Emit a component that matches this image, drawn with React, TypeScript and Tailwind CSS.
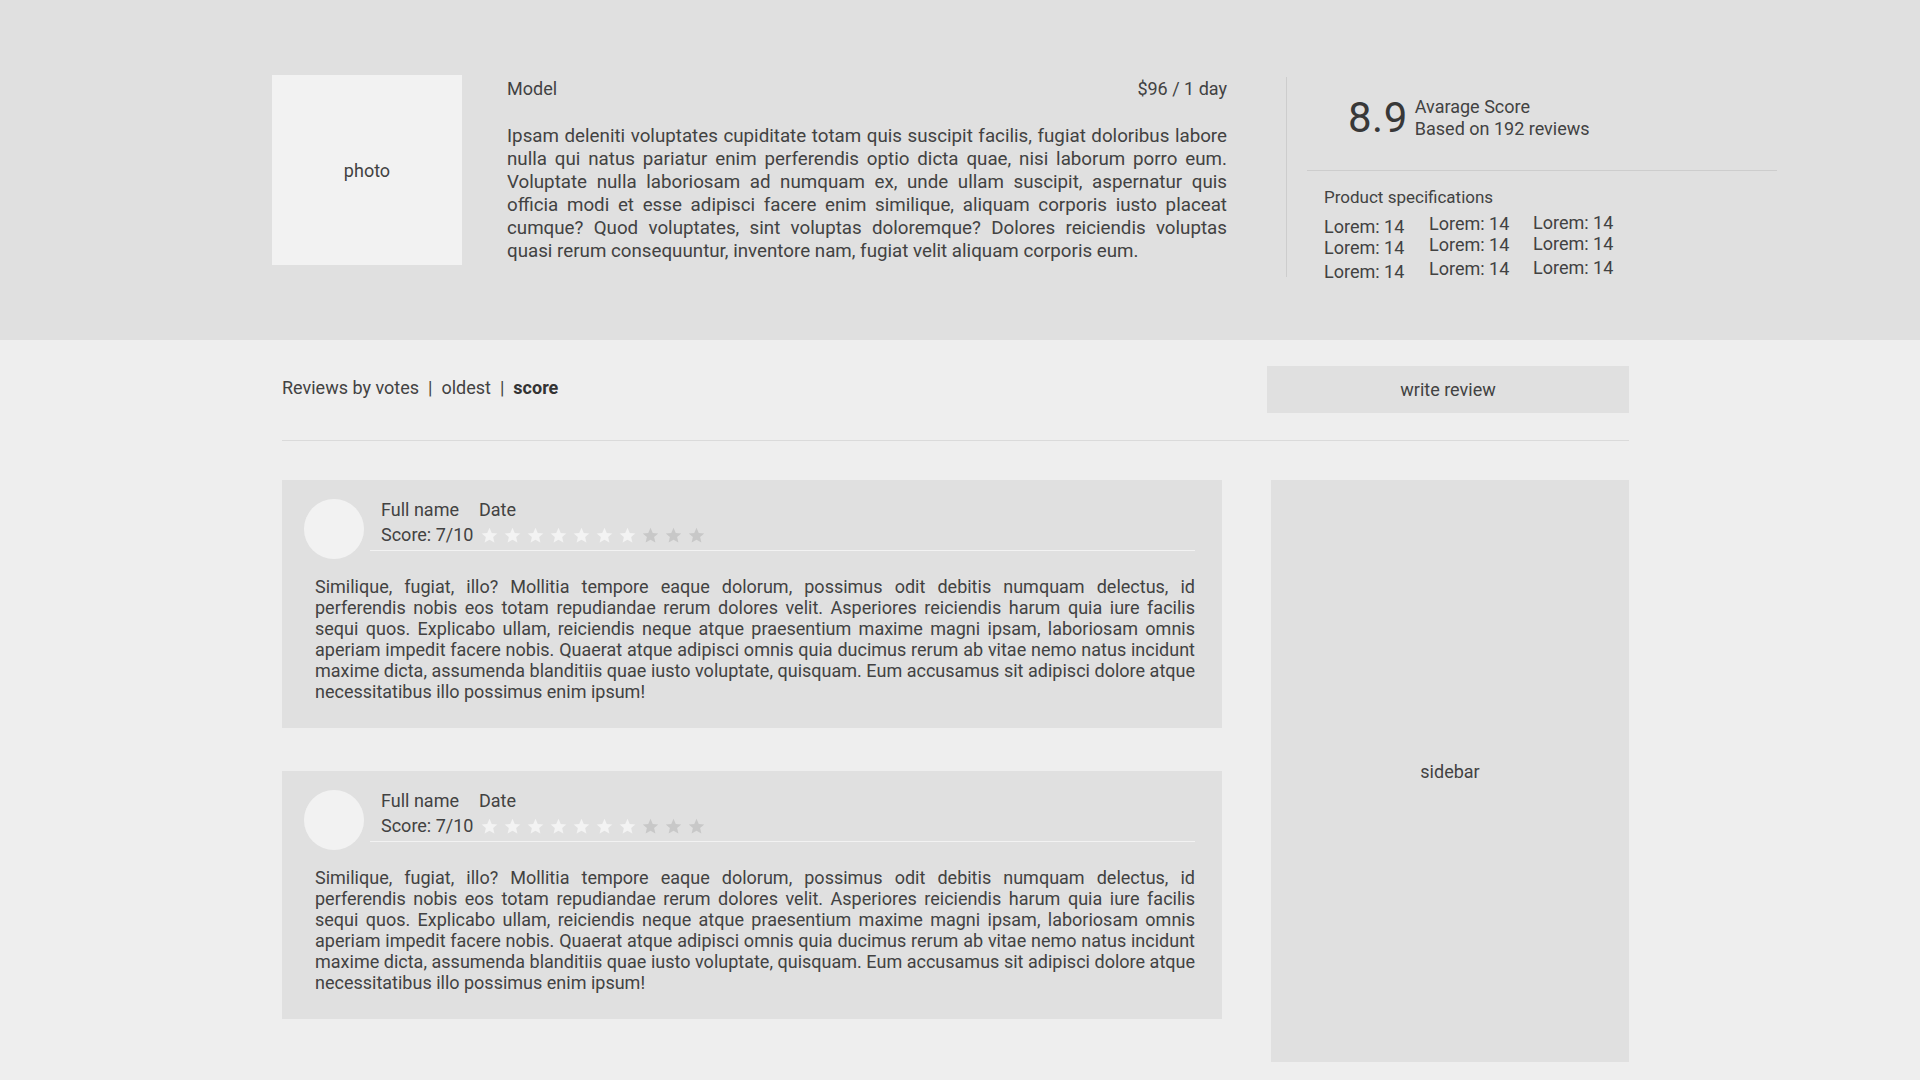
import React from "react";

const REVIEW_TEXT =
  "Similique, fugiat, illo? Mollitia tempore eaque dolorum, possimus odit debitis numquam delectus, id perferendis nobis eos totam repudiandae rerum dolores velit. Asperiores reiciendis harum quia iure facilis sequi quos. Explicabo ullam, reiciendis neque atque praesentium maxime magni ipsam, laboriosam omnis aperiam impedit facere nobis. Quaerat atque adipisci omnis quia ducimus rerum ab vitae nemo natus incidunt maxime dicta, assumenda blanditiis quae iusto voluptate, quisquam. Eum accusamus sit adipisci dolore atque necessitatibus illo possimus enim ipsum!";

const DESCRIPTION =
  "Ipsam deleniti voluptates cupiditate totam quis suscipit facilis, fugiat doloribus labore nulla qui natus pariatur enim perferendis optio dicta quae, nisi laborum porro eum. Voluptate nulla laboriosam ad numquam ex, unde ullam suscipit, aspernatur quis officia modi et esse adipisci facere enim similique, aliquam corporis iusto placeat cumque? Quod voluptates, sint voluptas doloremque? Dolores reiciendis voluptas quasi rerum consequuntur, inventore nam, fugiat velit aliquam corporis eum.";

function Star({ lit }: { lit: boolean }) {
  return (
    <svg width="17" height="17" viewBox="0 0 24 24" className={lit ? "fill-[#f3f3f3]" : "fill-[#c8c8c8]"}>
      <path d="M12 1l3.2 7.3 7.8.7-5.9 5.2 1.8 7.7L12 17.9l-6.9 4 1.8-7.7L1 9l7.8-.7z" />
    </svg>
  );
}

function ReviewCard() {
  return (
    <div className="bg-[#e0e0e0] pl-[22px] pr-[27px] pt-[19px] pb-[26px]">
      <div className="flex items-start">
        <div className="w-[60px] h-[60px] rounded-full bg-[#f2f2f2] shrink-0" />
        <div className="ml-[6px] flex-1 pl-[11px] pb-[3px] border-b border-[#f2f2f2] leading-[24px]">
          <div className="flex gap-[20px] -mt-[1px]">
            <span>Full name</span>
            <span>Date</span>
          </div>
          <div className="flex items-center mt-[1px]">
            <span>Score: 7/10</span>
            <div className="ml-[8px] flex gap-[6px]">
              {Array.from({ length: 10 }).map((_, i) => (
                <Star key={i} lit={i < 7} />
              ))}
            </div>
          </div>
        </div>
      </div>
      <p className="mt-[17px] pl-[11px] text-justify leading-[21px]">{REVIEW_TEXT}</p>
    </div>
  );
}

const SPEC_COLS = [
  { cls: "w-[105px] mt-[4px]" },
  { cls: "w-[104px] mt-[1px]" },
  { cls: "w-[104px] mt-0" },
];

export default function App() {
  return (
    <div className="min-h-screen bg-[#eeeeee] font-['Roboto',sans-serif] text-[18px] text-[#424242]">
      {/* Product header */}
      <header className="h-[340px] bg-[#e0e0e0] pl-[272px] pt-[75px] flex items-start">
        <div className="w-[190px] h-[190px] bg-[#f2f2f2] flex items-center justify-center shrink-0">photo</div>

        <div className="ml-[45px] w-[720px] leading-[23px]">
          <div className="flex justify-between mt-[2px]">
            <span>Model</span>
            <span>$96 / 1 day</span>
          </div>
          <p className="mt-[25px] text-justify text-[18.75px]">{DESCRIPTION}</p>
        </div>

        <div className="ml-[59px] mt-[2px] w-px h-[200px] bg-[#cdcdcd]" />

        <div className="ml-[20px] w-[470px]">
          <div className="flex items-center pl-[41px] mt-[21px]">
            <span className="text-[42px] leading-none text-[#383838] tracking-[0.5px]">8.9</span>
            <div className="ml-[7px] leading-[22px]">
              <div>Avarage Score</div>
              <div>Based on 192 reviews</div>
            </div>
          </div>
          <div className="mt-[30px] h-px bg-[#cdcdcd]" />
          <div className="pl-[17px] pt-[16px]">
            <div className="text-[17px] leading-[21px]">Product specifications</div>
            <div className="flex mt-[4px]">
              {SPEC_COLS.map((c, i) => (
                <div key={i} className={`${c.cls} leading-[21px]`}>
                  <div>Lorem: 14</div>
                  <div>Lorem: 14</div>
                  <div className="mt-[3px]">Lorem: 14</div>
                </div>
              ))}
            </div>
          </div>
        </div>
      </header>

      {/* Reviews */}
      <main className="ml-[282px] w-[1347px] pt-[26px] pb-[18px]">
        <div className="flex items-center justify-between">
          <div className="flex items-center gap-[9px] pb-[5px]">
            <span>Reviews by votes</span>
            <span>|</span>
            <span>oldest</span>
            <span>|</span>
            <span className="font-bold text-[#333]">score</span>
          </div>
          <button className="w-[362px] h-[47px] bg-[#e0e0e0] text-[#424242]">write review</button>
        </div>

        <div className="mt-[27px] h-px bg-[#dadada]" />

        <div className="mt-[39px] flex justify-between items-start">
          <div className="w-[940px] flex flex-col gap-[43px]">
            <ReviewCard />
            <ReviewCard />
          </div>
          <aside className="w-[358px] h-[582px] bg-[#e0e0e0] flex items-center justify-center">sidebar</aside>
        </div>
      </main>
    </div>
  );
}
